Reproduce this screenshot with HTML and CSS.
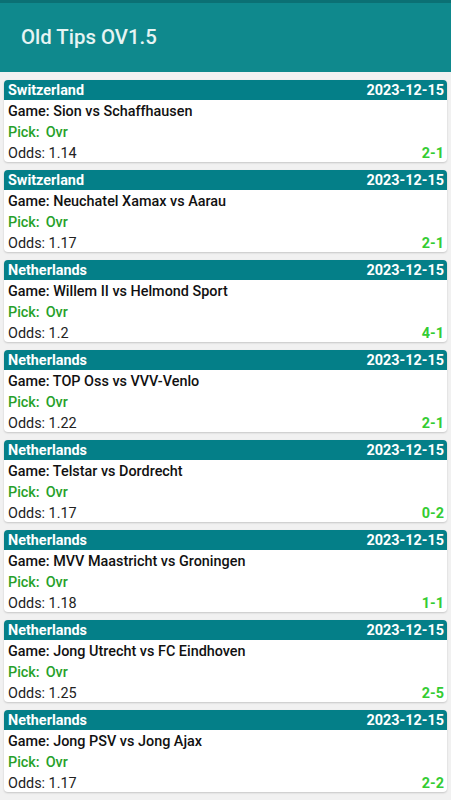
FILE: index.html
```html
<!DOCTYPE html>
<html lang="en">
<head>
    <meta charset="UTF-8">
    <meta name="viewport" content="width=device-width, initial-scale=1.0">
    <title>Old Tips OV1.5</title>
    <link rel="stylesheet" href="styles.css">
</head>
<body>
    <div class="status-strip"></div>
    <header class="app-bar">
        <h1>Old Tips OV1.5</h1>
    </header>
    <main class="tips-list" id="tipsList"></main>
    <script>
        var tips = [
            ["Switzerland", "Sion vs Schaffhausen", "1.14", "2-1"],
            ["Switzerland", "Neuchatel Xamax vs Aarau", "1.17", "2-1"],
            ["Netherlands", "Willem II vs Helmond Sport", "1.2", "4-1"],
            ["Netherlands", "TOP Oss vs VVV-Venlo", "1.22", "2-1"],
            ["Netherlands", "Telstar vs Dordrecht", "1.17", "0-2"],
            ["Netherlands", "MVV Maastricht vs Groningen", "1.18", "1-1"],
            ["Netherlands", "Jong Utrecht vs FC Eindhoven", "1.25", "2-5"],
            ["Netherlands", "Jong PSV vs Jong Ajax", "1.17", "2-2"]
        ];

        var list = document.getElementById('tipsList');
        tips.forEach(function (t) {
            var card = document.createElement('section');
            card.className = 'tip-card';
            card.innerHTML = `
                <div class="tip-head"><span>${t[0]}</span><span>2023-12-15</span></div>
                <div class="tip-game">Game: ${t[1]}</div>
                <div class="tip-pick"><span>Pick:</span><span>Ovr</span></div>
                <div class="tip-odds"><span>Odds: ${t[2]}</span><span class="tip-score">${t[3]}</span></div>
            `;
            list.appendChild(card);
        });
    </script>
</body>
</html>
```

FILE: styles.css
```css
body {
    margin: 0;
    padding: 0;
    background-color: #f1f1f1;
    font-family: Roboto, "Liberation Sans", sans-serif;
    color: #1c1c1c;
}

.status-strip {
    height: 3px;
    background-color: #0b7074;
}

.app-bar {
    background-color: #0f898d;
    height: 69px;
    display: flex;
    align-items: center;
    padding-left: 21px;
}

.app-bar h1 {
    margin: 0;
    margin-top: -1px;
    font-size: 20.4px;
    font-weight: 500;
    color: #e6f4f3;
}

.tips-list {
    padding: 8px 4px;
    display: flex;
    flex-direction: column;
    gap: 8px;
}

.tip-card {
    background-color: #fff;
    border-radius: 4px;
    overflow: hidden;
    box-shadow: 0px 1px 2px rgba(0, 0, 0, 0.18);
    font-size: 14.4px;
    line-height: 20px;
}

.tip-card > div {
    box-sizing: border-box;
}

.tip-head {
    background-color: #047f88;
    color: #fff;
    font-weight: 700;
    height: 20px;
    display: flex;
    justify-content: space-between;
    padding: 1px 3px 0 4px;
}

.tip-game {
    height: 21px;
    padding: 2px 0 0 4px;
    font-weight: 500;
    color: #111;
}

.tip-pick {
    height: 21px;
    display: flex;
    gap: 6px;
    font-weight: 500;
    color: #27a12a;
    padding: 2px 0 0 4px;
}

.tip-odds {
    height: 20px;
    display: flex;
    justify-content: space-between;
    color: #222;
    padding: 2px 3px 0 4px;
}

.tip-score {
    color: #33cc33;
    font-weight: 700;
}
```
